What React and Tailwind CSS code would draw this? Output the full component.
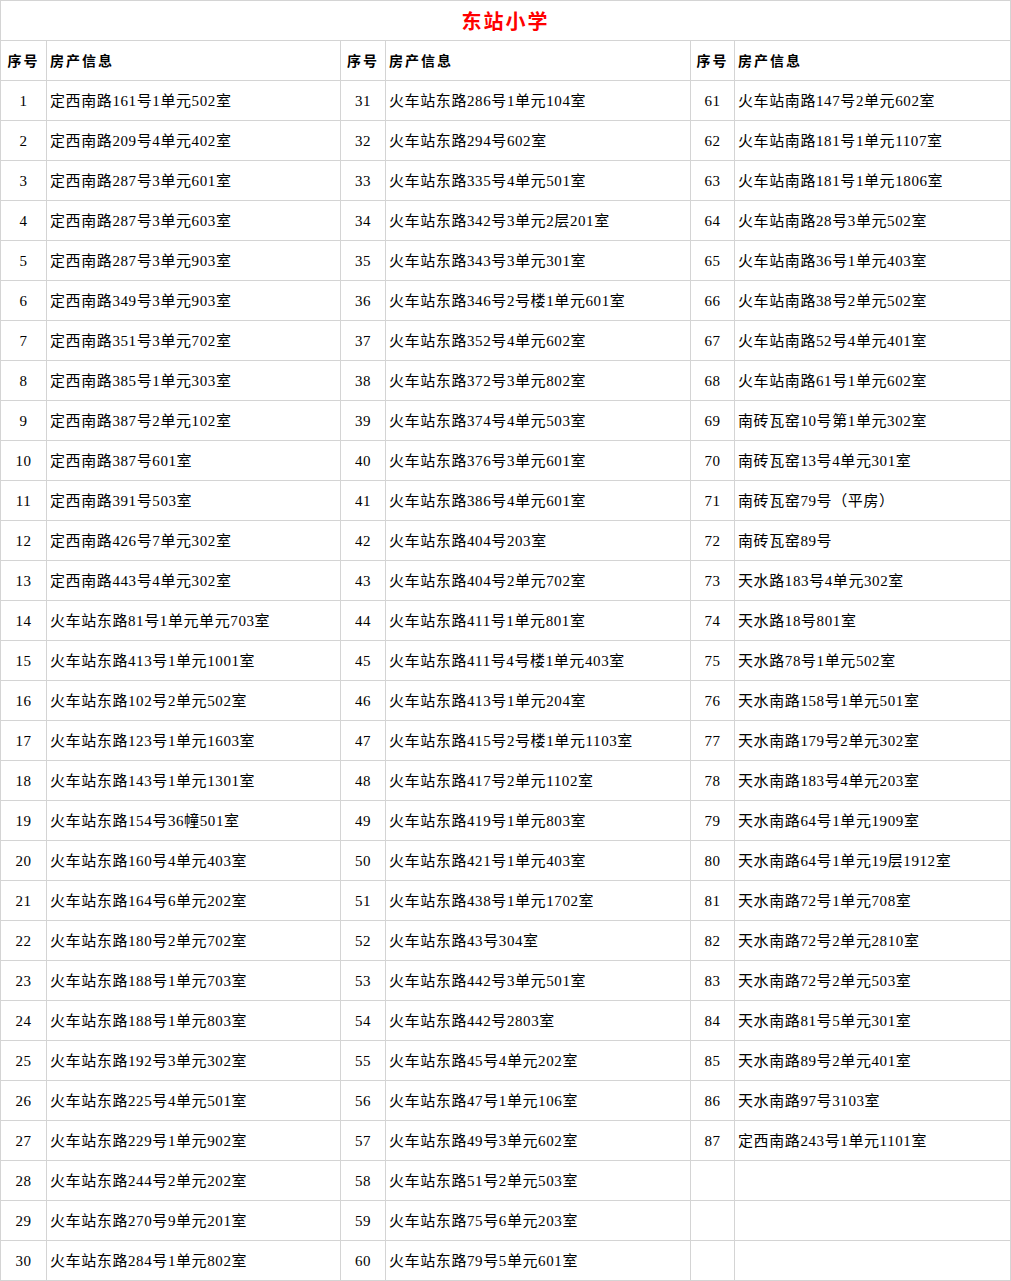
import React from 'react';

const colA = [
  '定西南路161号1单元502室',
  '定西南路209号4单元402室',
  '定西南路287号3单元601室',
  '定西南路287号3单元603室',
  '定西南路287号3单元903室',
  '定西南路349号3单元903室',
  '定西南路351号3单元702室',
  '定西南路385号1单元303室',
  '定西南路387号2单元102室',
  '定西南路387号601室',
  '定西南路391号503室',
  '定西南路426号7单元302室',
  '定西南路443号4单元302室',
  '火车站东路81号1单元单元703室',
  '火车站东路413号1单元1001室',
  '火车站东路102号2单元502室',
  '火车站东路123号1单元1603室',
  '火车站东路143号1单元1301室',
  '火车站东路154号36幢501室',
  '火车站东路160号4单元403室',
  '火车站东路164号6单元202室',
  '火车站东路180号2单元702室',
  '火车站东路188号1单元703室',
  '火车站东路188号1单元803室',
  '火车站东路192号3单元302室',
  '火车站东路225号4单元501室',
  '火车站东路229号1单元902室',
  '火车站东路244号2单元202室',
  '火车站东路270号9单元201室',
  '火车站东路284号1单元802室',
];

const colB = [
  '火车站东路286号1单元104室',
  '火车站东路294号602室',
  '火车站东路335号4单元501室',
  '火车站东路342号3单元2层201室',
  '火车站东路343号3单元301室',
  '火车站东路346号2号楼1单元601室',
  '火车站东路352号4单元602室',
  '火车站东路372号3单元802室',
  '火车站东路374号4单元503室',
  '火车站东路376号3单元601室',
  '火车站东路386号4单元601室',
  '火车站东路404号203室',
  '火车站东路404号2单元702室',
  '火车站东路411号1单元801室',
  '火车站东路411号4号楼1单元403室',
  '火车站东路413号1单元204室',
  '火车站东路415号2号楼1单元1103室',
  '火车站东路417号2单元1102室',
  '火车站东路419号1单元803室',
  '火车站东路421号1单元403室',
  '火车站东路438号1单元1702室',
  '火车站东路43号304室',
  '火车站东路442号3单元501室',
  '火车站东路442号2803室',
  '火车站东路45号4单元202室',
  '火车站东路47号1单元106室',
  '火车站东路49号3单元602室',
  '火车站东路51号2单元503室',
  '火车站东路75号6单元203室',
  '火车站东路79号5单元601室',
];

const colC = [
  '火车站南路147号2单元602室',
  '火车站南路181号1单元1107室',
  '火车站南路181号1单元1806室',
  '火车站南路28号3单元502室',
  '火车站南路36号1单元403室',
  '火车站南路38号2单元502室',
  '火车站南路52号4单元401室',
  '火车站南路61号1单元602室',
  '南砖瓦窑10号第1单元302室',
  '南砖瓦窑13号4单元301室',
  '南砖瓦窑79号（平房）',
  '南砖瓦窑89号',
  '天水路183号4单元302室',
  '天水路18号801室',
  '天水路78号1单元502室',
  '天水南路158号1单元501室',
  '天水南路179号2单元302室',
  '天水南路183号4单元203室',
  '天水南路64号1单元1909室',
  '天水南路64号1单元19层1912室',
  '天水南路72号1单元708室',
  '天水南路72号2单元2810室',
  '天水南路72号2单元503室',
  '天水南路81号5单元301室',
  '天水南路89号2单元401室',
  '天水南路97号3103室',
  '定西南路243号1单元1101室',
];

const font = { fontFamily: '"Liberation Serif", "Noto Sans CJK SC", serif' };

const cell = 'h-10 border-r border-b border-[#d4d4d4] flex items-center pt-px';
const numCell = `${cell} justify-center text-[15px] tracking-[0.6px]`;
const infoCell = `${cell} pl-[3px] text-[15px] tracking-[0.6px] whitespace-nowrap overflow-hidden`;
const headNum = `${cell} justify-center text-[14px] font-bold tracking-[2px]`;
const headInfo = `${cell} pl-[3px] text-[14px] font-bold tracking-[2px]`;

export default function App() {
  const rows = Array.from({ length: 30 }, (_, i) => i);
  const groups = [
    { start: 1, items: colA },
    { start: 31, items: colB },
    { start: 61, items: colC },
  ];

  return (
    <div className="bg-white text-black" style={font}>
      <div className="w-[1011px] border-l border-t border-[#d4d4d4] grid grid-cols-[46px_294px_45px_305px_44px_276px]">
        <div className="col-span-6 h-10 border-r border-b border-[#d4d4d4] flex items-center justify-center pt-[3px] text-[20px] font-semibold tracking-[2px] text-[#ff0000]">
          东站小学
        </div>

        {groups.map((g) => (
          <React.Fragment key={`h${g.start}`}>
            <div className={headNum}>序号</div>
            <div className={headInfo}>房产信息</div>
          </React.Fragment>
        ))}

        {rows.map((r) =>
          groups.map((g) => {
            const text = g.items[r];
            return (
              <React.Fragment key={`${g.start}-${r}`}>
                <div className={numCell}>{text ? g.start + r : ''}</div>
                <div className={infoCell}>{text || ''}</div>
              </React.Fragment>
            );
          })
        )}
      </div>
    </div>
  );
}
